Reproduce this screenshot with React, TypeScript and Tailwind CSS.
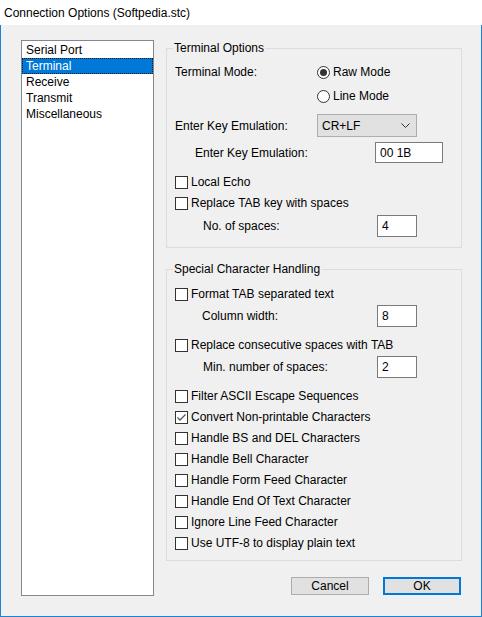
import React from "react";

const Checkbox = ({ label, checked = false, className = "" }: { label: string; checked?: boolean; className?: string }) => (
  <div className={`flex items-center h-[16px] ${className}`}>
    <div className="w-[13px] h-[13px] border border-[#333333] bg-white flex items-center justify-center shrink-0">
      {checked && (
        <svg width="11" height="11" viewBox="0 0 11 11">
          <polyline points="1.5,5.5 4,8 9.5,2.5" fill="none" stroke="#555555" strokeWidth="1.3" />
        </svg>
      )}
    </div>
    <span className="ml-[3px] whitespace-nowrap">{label}</span>
  </div>
);

const Radio = ({ label, checked = false }: { label: string; checked?: boolean }) => (
  <div className="flex items-center h-[16px]">
    <div className="w-[13px] h-[13px] rounded-full border border-[#333333] bg-white flex items-center justify-center shrink-0">
      {checked && <div className="w-[7px] h-[7px] rounded-full bg-[#333333]" />}
    </div>
    <span className="ml-[3px] whitespace-nowrap">{label}</span>
  </div>
);

const TextBox = ({ value, className = "" }: { value: string; className?: string }) => (
  <div className={`h-full border border-[#7a7a7a] bg-white flex items-center pl-[4px] ${className}`}>{value}</div>
);

export default function App() {
  const items = ["Serial Port", "Terminal", "Receive", "Transmit", "Miscellaneous"];
  return (
    <div className="w-[482px] h-[617px] bg-white text-[12px] leading-[16px] text-black flex flex-col font-['Liberation_Sans',Arial,sans-serif]">
      <div className="h-[25px] pl-[4px] flex items-center shrink-0">Connection Options (Softpedia.stc)</div>
      <div className="flex-1 bg-[#f0f0f0] border-x border-b border-[#1883d7]">
        <div className="flex pt-[15px] pl-[20px]">
          {/* List box */}
          <div className="w-[133px] h-[556px] border border-[#828790] bg-white flex flex-col pt-[1px]">
            {items.map((it) =>
              it === "Terminal" ? (
                <div key={it} className="h-[16px] bg-[#0078d7] text-white border border-dotted border-[#1a1a1a] pl-[3px] flex items-center">
                  {it}
                </div>
              ) : (
                <div key={it} className="h-[16px] pl-[4px] flex items-center">
                  {it}
                </div>
              )
            )}
          </div>

          {/* Right column */}
          <div className="ml-[12px] w-[296px] flex flex-col">
            <fieldset className="border border-[#dcdcdc] pl-[8px] pb-[10px]">
              <legend className="-ml-[2px] px-[1px] leading-[16px]">Terminal Options</legend>
              <div className="flex items-center h-[16px] mt-[8px]">
                <span className="w-[142px]">Terminal Mode:</span>
                <Radio label="Raw Mode" checked />
              </div>
              <div className="flex items-center h-[16px] mt-[8px] pl-[142px]">
                <Radio label="Line Mode" />
              </div>
              <div className="flex items-center h-[23px] mt-[10px]">
                <span className="w-[142px]">Enter Key Emulation:</span>
                <div className="w-[100px] h-full bg-[#e1e1e1] border border-[#adadad] flex items-center justify-between pl-[4px] pr-[6px]">
                  <span>CR+LF</span>
                  <svg width="9" height="5" viewBox="0 0 9 5">
                    <polyline points="0.5,0.5 4.5,4.5 8.5,0.5" fill="none" stroke="#333333" strokeWidth="1" />
                  </svg>
                </div>
              </div>
              <div className="flex items-center h-[21px] mt-[5px]">
                <span className="w-[200px] pl-[20px]">Enter Key Emulation:</span>
                <TextBox value="00 1B" className="w-[68px]" />
              </div>
              <Checkbox label="Local Echo" className="mt-[11px]" />
              <Checkbox label="Replace TAB key with spaces" className="mt-[5px]" />
              <div className="flex items-center h-[22px] mt-[4px]">
                <span className="w-[202px] pl-[28px]">No. of spaces:</span>
                <TextBox value="4" className="w-[40px]" />
              </div>
            </fieldset>

            <fieldset className="border border-[#dcdcdc] pl-[8px] pb-[9px] mt-[13px]">
              <legend className="-ml-[2px] px-[1px] leading-[16px]">Special Character Handling</legend>
              <Checkbox label="Format TAB separated text" className="mt-[9px]" />
              <div className="flex items-center h-[22px] mt-[3px]">
                <span className="w-[202px] pl-[27px]">Column width:</span>
                <TextBox value="8" className="w-[40px]" />
              </div>
              <Checkbox label="Replace consecutive spaces with TAB" className="mt-[10px]" />
              <div className="flex items-center h-[22px] mt-[3px]">
                <span className="w-[202px] pl-[28px]">Min. number of spaces:</span>
                <TextBox value="2" className="w-[40px]" />
              </div>
              <Checkbox label="Filter ASCII Escape Sequences" className="mt-[10px]" />
              <Checkbox label="Convert Non-printable Characters" checked className="mt-[5px]" />
              <Checkbox label="Handle BS and DEL Characters" className="mt-[5px]" />
              <Checkbox label="Handle Bell Character" className="mt-[5px]" />
              <Checkbox label="Handle Form Feed Character" className="mt-[5px]" />
              <Checkbox label="Handle End Of Text Character" className="mt-[5px]" />
              <Checkbox label="Ignore Line Feed Character" className="mt-[5px]" />
              <Checkbox label="Use UTF-8 to display plain text" className="mt-[5px]" />
            </fieldset>

            <div className="flex justify-end mt-[16px] pr-[1px]">
              <button className="w-[78px] h-[18px] bg-[#e1e1e1] border border-[#adadad] flex items-center justify-center">Cancel</button>
              <button className="w-[78px] h-[18px] ml-[14px] bg-[#e1e1e1] border-2 border-[#0078d7] flex items-center justify-center">OK</button>
            </div>
          </div>
        </div>
      </div>
    </div>
  );
}
